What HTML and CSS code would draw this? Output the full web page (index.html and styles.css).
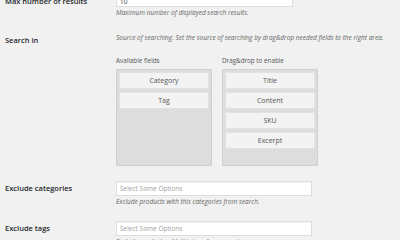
FILE: index.html
```html
<!DOCTYPE html>
<html>
<head>
<meta charset="utf-8">
<link rel="stylesheet" href="styles.css">
</head>
<body>
<div class="form">
  <div class="row first-row">
    <div class="th">Max number of results</div>
    <div class="td">
      <div class="input num">10</div>
      <p class="desc">Maximum number of displayed search results.</p>
    </div>
  </div>
  <div class="row">
    <div class="th">Search in</div>
    <div class="td">
      <p class="desc first">Source of searching. Set the source of searching by drag&amp;drop needed fields to the right area.</p>
      <div class="cols">
        <div class="col">
          <div class="col-title">Available fields</div>
          <div class="box">
            <div class="item">Category</div>
            <div class="item">Tag</div>
          </div>
        </div>
        <div class="col">
          <div class="col-title">Drag&amp;drop to enable</div>
          <div class="box">
            <div class="item">Title</div>
            <div class="item">Content</div>
            <div class="item">SKU</div>
            <div class="item">Excerpt</div>
          </div>
        </div>
      </div>
    </div>
  </div>
  <div class="row">
    <div class="th">Exclude categories</div>
    <div class="td">
      <div class="input select">Select Some Options</div>
      <p class="desc">Exclude products with this categories from search.</p>
    </div>
  </div>
  <div class="row">
    <div class="th">Exclude tags</div>
    <div class="td">
      <div class="input select">Select Some Options</div>
      <p class="desc">Exclude products with this tags from search.</p>
    </div>
  </div>
</div>
</body>
</html>
```
FILE: styles.css
```css
html, body {
  margin: 0;
  padding: 0;
  background: #f1f1f1;
  font-family: "Open Sans", "Noto Sans", sans-serif;
  color: #444;
  overflow: hidden;
}
.form {
  margin-top: -13px;
  padding-left: 5px;
}
.row {
  display: flex;
  padding: 7px 0 8px;
}
.row.first-row {
  padding-bottom: 9px;
}
.th {
  width: 111px;
  flex: none;
  font-size: 7.5px;
  font-weight: 600;
  color: #23282d;
  line-height: 15px;
}
.td {
  flex: 1;
}
.input {
  box-sizing: border-box;
  height: 15px;
  background: #fff;
  border: 1px solid #ddd;
  box-shadow: inset 0 1px 1px rgba(0,0,0,0.05);
  font-size: 6.5px;
  line-height: 13px;
  padding-left: 3px;
}
.input.num {
  width: 177px;
  height: 13px;
  line-height: 14px;
  color: #333;
}
.input.select {
  width: 196px;
  color: #a0a0a0;
}
.desc {
  margin: 1px 0 0;
  font-size: 6.5px;
  font-style: italic;
  color: #666;
  line-height: 9px;
}
.desc.first {
  margin-top: 0;
}
.cols {
  display: flex;
  gap: 10px;
  margin-top: 14px;
}
.col {
  width: 96px;
}
.col-title {
  font-size: 6.3px;
  color: #555;
  line-height: 9px;
  margin-bottom: 4px;
}
.box {
  box-sizing: border-box;
  height: 97px;
  background: #dddddd;
  border: 1px solid #d0d0d0;
  padding: 2px;
  display: flex;
  flex-direction: column;
  gap: 3px;
}
.item {
  box-sizing: border-box;
  height: 17px;
  background: #f3f3f3;
  border: 1px solid #e2e2e2;
  text-align: center;
  font-size: 7px;
  line-height: 15px;
  color: #555;
}
```
